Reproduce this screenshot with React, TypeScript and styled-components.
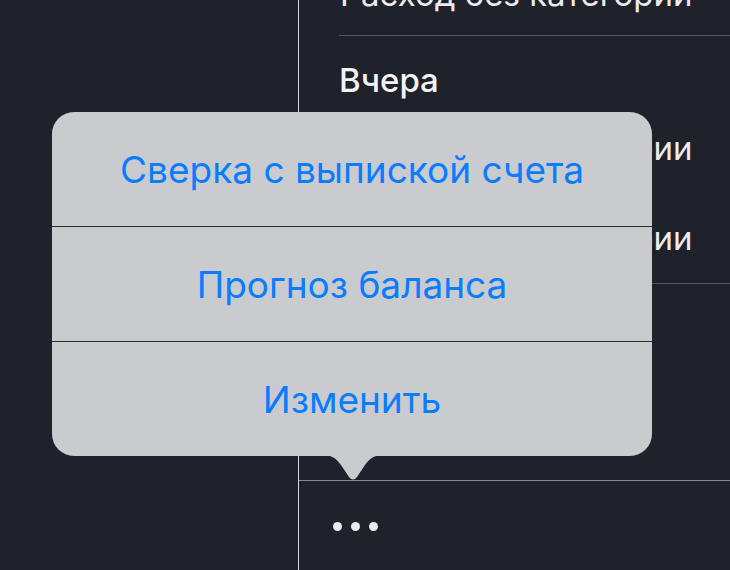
import React from "react";
import styled, { createGlobalStyle } from "styled-components";

const Global = createGlobalStyle`
  html, body { margin: 0; padding: 0; background: #1f212b; }
  body { width: 730px; height: 570px; overflow: hidden; font-family: Inter, "Noto Sans", sans-serif; }
`;

const Page = styled.div`
  position: relative;
  display: grid;
  grid-template-columns: 299px 1fr;
  width: 730px;
  height: 570px;
  background: #1f212b;
  overflow: hidden;
`;

const Sidebar = styled.aside`
  border-right: 1px solid #dcdcdc;
`;

const Content = styled.main`
  display: flex;
  flex-direction: column;
  min-width: 0;
`;

const ClippedRow = styled.div`
  height: 35px;
  overflow: hidden;
  display: flex;
  align-items: flex-end;
  padding-left: 41px;
`;

const RowText = styled.span<{ $mt?: number }>`
  display: block;
  font-size: 33px;
  line-height: 33px;
  color: #ececef;
  white-space: nowrap;
  margin-top: ${(p) => p.$mt ?? 0}px;
  padding-left: 41px;
`;

const ClippedText = styled.span`
  font-size: 33px;
  line-height: 33px;
  color: #ececef;
  white-space: nowrap;
  margin-bottom: 24px;
`;

const Separator = styled.div<{ $inset?: number; $color?: string; $mt?: number }>`
  height: 1px;
  margin-left: ${(p) => p.$inset ?? 0}px;
  margin-top: ${(p) => p.$mt ?? 0}px;
  background: ${(p) => p.$color ?? "#55575f"};
`;

const DayHeader = styled.div`
  padding: 28px 0 0 40px;
  font-size: 33px;
  line-height: 33px;
  font-weight: 500;
  color: #f2f2f4;
`;

const MoreButton = styled.button`
  display: flex;
  gap: 9px;
  align-items: center;
  background: none;
  border: 0;
  padding: 0;
  margin: 41px 0 0 34px;
  height: 9px;
  cursor: pointer;
`;

const Dot = styled.span`
  width: 9px;
  height: 9px;
  border-radius: 50%;
  background: #ececef;
`;

const Popover = styled.div`
  position: absolute;
  left: 52px;
  top: 112px;
  width: 600px;
  display: flex;
  flex-direction: column;
  background: #c9cbce;
  border-radius: 22px;
`;

const Item = styled.button`
  height: 114px;
  display: flex;
  align-items: center;
  justify-content: center;
  background: none;
  border: 0;
  font-family: Inter, "Noto Sans", sans-serif;
  font-size: 37px;
  color: #0a7cff;
  cursor: pointer;
`;

const ItemDivider = styled.div`
  height: 1px;
  background: #262833;
`;

const Arrow = styled.svg`
  position: absolute;
  left: 268px;
  top: 343px;
`;

export default function App() {
  const items = ["Сверка с выпиской счета", "Прогноз баланса", "Изменить"];
  return (
    <>
      <Global />
      <Page>
        <Sidebar />
        <Content>
          <ClippedRow>
            <ClippedText>Расход без категории</ClippedText>
          </ClippedRow>
          <Separator $inset={40} />
          <DayHeader>Вчера</DayHeader>
          <RowText $mt={35}>Расход без категории</RowText>
          <RowText $mt={57}>Расход без категории</RowText>
          <Separator $inset={40} $mt={28} />
          <Separator $color="#8a8c91" $mt={196} />
          <MoreButton aria-label="Ещё">
            <Dot />
            <Dot />
            <Dot />
          </MoreButton>
        </Content>
        <Popover>
          {items.map((t, i) => (
            <React.Fragment key={t}>
              {i > 0 && <ItemDivider />}
              <Item>{t}</Item>
            </React.Fragment>
          ))}
          <Arrow width="66" height="26" viewBox="0 0 66 26">
            <path
              d="M0 0 C11 0 15 2 21 10 L29 22 Q33 27 37 22 L45 10 C51 2 55 0 66 0 Z"
              fill="#c9cbce"
            />
          </Arrow>
        </Popover>
      </Page>
    </>
  );
}
